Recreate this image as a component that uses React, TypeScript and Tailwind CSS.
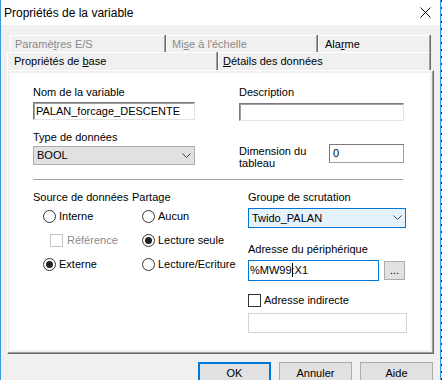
import React from "react";

function Chevron() {
  return (
    <svg width="9" height="6" viewBox="0 0 9 6" className="block">
      <polyline points="0.5,0.5 4.5,4.5 8.5,0.5" fill="none" stroke="#444" strokeWidth="1" />
    </svg>
  );
}

function Radio({ checked, label, disabled }: { checked?: boolean; label: string; disabled?: boolean }) {
  return (
    <div className="h-[24px] flex items-center">
      <div className="w-[13px] h-[13px] rounded-full border border-[#333] bg-white flex items-center justify-center">
        {checked && <div className="w-[7px] h-[7px] rounded-full bg-[#222]" />}
      </div>
      <span className={"ml-[3px] " + (disabled ? "text-[#8c8c8c]" : "")}>{label}</span>
    </div>
  );
}

function Tab({ w, pl, children, gray, h }: { w: string; pl: string; children: React.ReactNode; gray?: boolean; h: string }) {
  return (
    <div className={`${w} ${h} border-r border-[#696969]`}>
      <div className={`h-full border-t border-l border-white border-r border-r-[#a0a0a0] flex items-center ${pl} ${gray ? "text-[#8a8a8a]" : "text-black"}`}>
        {children}
      </div>
    </div>
  );
}

export default function App() {
  return (
    <div className="w-[442px] h-[380px] overflow-hidden flex bg-[#f0f0f0] font-['Liberation_Sans',Arial,sans-serif] text-[11px] leading-[13px] text-black">
      <div className="w-px shrink-0 bg-[#3a9ad9]" />
      <div className="w-[439px] shrink-0 flex flex-col">
        {/* Title bar */}
        <div className="h-[25px] shrink-0 bg-white flex items-center justify-between pl-[3px] pr-[9px]">
          <span className="text-[12px] leading-[14px]">Propriétés de la variable</span>
          <svg width="11" height="11" viewBox="0 0 11 11" className="block">
            <line x1="0.5" y1="0.5" x2="10.5" y2="10.5" stroke="#111" strokeWidth="1" />
            <line x1="10.5" y1="0.5" x2="0.5" y2="10.5" stroke="#111" strokeWidth="1" />
          </svg>
        </div>
        {/* Body */}
        <div className="flex-1 flex flex-col pt-[10px]">
          {/* Tab row 1 */}
          <div className="flex pl-[9px]">
            <Tab w="w-[156px]" h="h-[17px]" pl="pl-[4px]" gray>
              <span>Paramè<u>t</u>res E/S</span>
            </Tab>
            <Tab w="w-[152px]" h="h-[17px]" pl="pl-[5px]" gray>
              <span>Mi<u>s</u>e à l'échelle</span>
            </Tab>
            <Tab w="w-[113px]" h="h-[17px]" pl="pl-[6px]">
              <span>Ala<u>r</u>me</span>
            </Tab>
          </div>
          {/* Tab row 2 */}
          <div className="flex pl-[6px]">
            <Tab w="w-[211px]" h="h-[18px]" pl="pl-[6px]">
              <span>Propriétés de <u>b</u>ase</span>
            </Tab>
            <Tab w="w-[213px]" h="h-[18px]" pl="pl-[4px]">
              <span><u>D</u>étails des données</span>
            </Tab>
          </div>
          {/* Panel */}
          <div className="ml-[6px] w-[427px] h-[284px] border-t border-l border-white border-r border-b border-r-[#696969] border-b-[#696969]">
            <div className="h-full border-r border-b border-[#a0a0a0] p-[2px] bg-[#f0f0f0]">
              <div className="h-full bg-white pl-[23px] pt-[13px]">
                {/* Top section */}
                <div className="flex items-start">
                  <div className="w-[162px] flex flex-col">
                    <div className="h-[13px] mb-[3px]">Nom de la variable</div>
                    <div className="h-[18px] border border-t-[#7a7a7a] border-l-[#7a7a7a] border-r-[#e3e3e3] border-b-[#e3e3e3] shadow-[inset_1px_1px_0_#a0a0a0] flex items-center pl-[2px]">
                      PALAN_forcage_DESCENTE
                    </div>
                    <div className="h-[13px] mt-[11px] mb-[2px]">Type de données</div>
                    <div className="h-[19px] bg-[#e1e1e1] border border-[#adadad] flex items-center justify-between pl-[3px] pr-[3px]">
                      <span>BOOL</span>
                      <Chevron />
                    </div>
                  </div>
                  <div className="ml-[44px] w-[165px] flex flex-col">
                    <div className="h-[13px] mb-[4px]">Description</div>
                    <div className="h-[18px] border border-t-[#7a7a7a] border-l-[#7a7a7a] border-r-[#e3e3e3] border-b-[#e3e3e3] shadow-[inset_1px_1px_0_#a0a0a0]" />
                    <div className="mt-[23px] flex h-[19px] items-start">
                      <div className="w-[90px] leading-[12px] pt-[1px]">
                        Dimension du
                        <br />
                        tableau
                      </div>
                      <div className="w-[75px] h-[19px] border border-[#7a7a7a] border-r-[#a0a0a0] border-b-[#a0a0a0] flex items-center pl-[3px]">0</div>
                    </div>
                  </div>
                </div>
                {/* Separator */}
                <div className="mt-[14px] w-[370px] h-px bg-[#a0a0a0]" />
                {/* Bottom section */}
                <div className="flex">
                  <div className="w-[99px] flex flex-col pt-[11px]">
                    <div className="h-[13px]">Source de données</div>
                    <div className="pl-[10px]">
                      <Radio label="Interne" />
                      <div className="h-[24px] flex items-center pl-[7px]">
                        <div className="w-[13px] h-[13px] border border-[#c4c4c4] bg-white" />
                        <span className="ml-[4px] text-[#8c8c8c]">Référence</span>
                      </div>
                      <Radio label="Externe" checked />
                    </div>
                  </div>
                  <div className="w-[116px] flex flex-col pt-[11px]">
                    <div className="h-[13px]">Partage</div>
                    <div className="pl-[10px]">
                      <Radio label="Aucun" />
                      <Radio label="Lecture seule" checked />
                      <Radio label="Lecture/Ecriture" />
                    </div>
                  </div>
                  <div className="w-[160px] flex flex-col pt-[11px]">
                    <div className="h-[13px] mb-[4px]">Groupe de scrutation</div>
                    <div className="w-[158px] h-[20px] bg-[#e5f1fb] border border-[#0078d7] flex items-center justify-between pl-[3px] pr-[3px]">
                      <span>Twido_PALAN</span>
                      <Chevron />
                    </div>
                    <div className="h-[13px] mt-[15px] mb-[4px]">Adresse du périphérique</div>
                    <div className="flex items-center">
                      <div className="w-[131px] h-[21px] border border-[#0078d7] bg-white flex items-center pl-[1px]">
                        <span>%MW99</span>
                        <span className="relative">
                          <span className="absolute left-0 top-[-1px] w-px h-[14px] bg-black" />:X1
                        </span>
                      </div>
                      <div className="ml-[5px] w-[21px] h-[19px] bg-[#e1e1e1] border border-[#adadad] flex items-center justify-center leading-[10px] pb-[2px]">
                        ...
                      </div>
                    </div>
                    <div className="mt-[13px] flex items-center h-[13px]">
                      <div className="w-[13px] h-[13px] border border-[#333] bg-white" />
                      <span className="ml-[3px]">Adresse indirecte</span>
                    </div>
                    <div className="mt-[6px] w-[159px] h-[20px] border border-[#d4d4d4] bg-white" />
                  </div>
                </div>
              </div>
            </div>
          </div>
          {/* Buttons */}
          <div className="mt-[8px] flex justify-end pr-[7px] gap-[8px]">
            <div className="w-[73px] h-[23px] bg-[#e1e1e1] border-2 border-[#0078d7] flex items-center justify-center">OK</div>
            <div className="w-[73px] h-[23px] bg-[#e1e1e1] border border-[#adadad] flex items-center justify-center">Annuler</div>
            <div className="w-[73px] h-[23px] bg-[#e1e1e1] border border-[#adadad] flex items-center justify-center">Aide</div>
          </div>
        </div>
      </div>
      <div className="w-px shrink-0 bg-[#3a9ad9]" />
      <div className="w-px shrink-0 bg-[repeating-linear-gradient(to_bottom,#222_0px,#222_2px,#dce9f3_2px,#dce9f3_7px)]" />
    </div>
  );
}
